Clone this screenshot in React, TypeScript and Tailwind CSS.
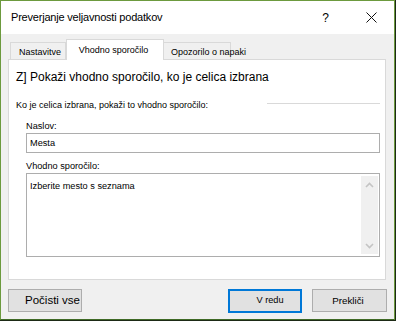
import React from 'react';

const FONT = { fontFamily: '"Liberation Sans", Arial, sans-serif' };

function Chevron({ down }: { down?: boolean }) {
  return (
    <svg width="9" height="6" viewBox="0 0 9 6" className={down ? 'rotate-180' : ''}>
      <path d="M1 5 L4.5 1.5 L8 5" fill="none" stroke="#c4c4c4" strokeWidth="1.6" />
    </svg>
  );
}

export default function App() {
  return (
    <div className="w-[396px] h-[321px] bg-[#1d2a16]" style={FONT}>
      <div className="w-[395px] h-[320px] flex flex-col bg-[#f0f0f0] border border-[#6c9a3e] border-b-[#3f6a26] text-black">
        {/* title bar */}
        <div className="h-[33px] shrink-0 bg-white flex items-center pl-[10px]">
          <span className="text-[11px] tracking-[-0.2px] leading-none">Preverjanje veljavnosti podatkov</span>
          <span className="ml-auto text-[12px] leading-none mr-[37px]">?</span>
          <svg width="11" height="11" viewBox="0 0 11 11" className="mr-[17px]">
            <path d="M0.5 0.5 L10.5 10.5 M10.5 0.5 L0.5 10.5" stroke="#111" strokeWidth="1" />
          </svg>
        </div>

        <div className="px-[7px] flex flex-col flex-1">
          {/* tabs */}
          <div className="h-[25px] flex items-end pl-[2px] text-[9px] leading-none">
            <div className="h-[17px] w-[56px] border border-b-0 border-[#d9d9d9] flex items-center pl-[8px] pt-[2px]">
              Nastavitve
            </div>
            <div className="relative z-10 -mb-px h-[21px] w-[98px] bg-white border border-b-0 border-[#d9d9d9] flex items-center justify-center pr-[3px] pt-[1px]">
              Vhodno sporočilo
            </div>
            <div className="h-[17px] w-[67px] border border-b-0 border-l-0 border-[#d9d9d9] flex items-center pl-[7px] pt-[3px] whitespace-nowrap overflow-visible">
              Opozorilo o napaki
            </div>
          </div>

          {/* panel */}
          <div className="w-[378px] h-[221px] bg-white border border-[#d9d9d9] pl-[7px] pr-[5px] pt-[9px] flex flex-col">
            <div className="text-[12px] leading-[16px] whitespace-nowrap">Z] Pokaži vhodno sporočilo, ko je celica izbrana</div>
            <div className="mt-[14px] flex items-center h-[12px] text-[9px] leading-[12px]">
              <span className="whitespace-nowrap">Ko je celica izbrana, pokaži to vhodno sporočilo:</span>
              <span className="ml-auto w-[113px] h-px bg-[#d9d9d9] -mt-[3px]" />
            </div>

            <div className="pl-[10px] flex flex-col text-[9.2px]">
              <div className="mt-[9px] leading-[12px]">Naslov:</div>
              <div className="mt-[1px] h-[20px] border border-[#adadad] flex items-center pl-[3px] pt-[1px]">Mesta</div>
              <div className="mt-[7px] leading-[12px]">Vhodno sporočilo:</div>
              <div className="mt-[1px] h-[84px] border border-[#adadad] flex pl-[3px] pr-[1px] py-[2px]">
                <div className="flex-1 pt-[4px] leading-[12px]">Izberite mesto s seznama</div>
                <div className="w-[17px] bg-[#f0f0f0] flex flex-col items-center justify-between pt-[6px] pb-[5px]">
                  <Chevron />
                  <Chevron down />
                </div>
              </div>
            </div>
          </div>

          {/* footer */}
          <div className="mt-[9px] flex items-start">
            <div className="w-[74px] h-[23px] bg-[#e1e1e1] border border-[#adadad] flex items-center justify-end pr-[1px] text-[11.5px] leading-none overflow-hidden whitespace-nowrap">
              Počisti vse
            </div>
            <div className="ml-auto w-[74px] h-[24px] bg-[#e1e1e1] border-2 border-[#0078d7] flex items-center justify-center pl-[10px] text-[9.2px] leading-none">
              V redu
            </div>
            <div className="ml-[10px] w-[75px] h-[23px] bg-[#e1e1e1] border border-[#adadad] flex items-center justify-center text-[9.8px] leading-none pr-[3px]">
              Prekliči
            </div>
          </div>
        </div>
      </div>
    </div>
  );
}
